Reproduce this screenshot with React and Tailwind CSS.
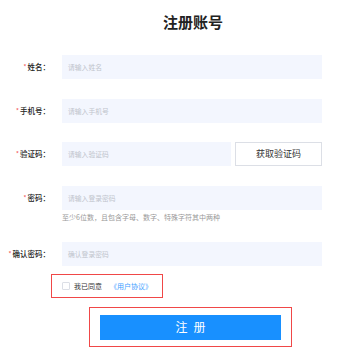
export default function App() {
  const font = { fontFamily: '"Noto Sans CJK SC", "Noto Sans", sans-serif' };
  const Row = ({ label, placeholder, mt, children }) => (
    <div className={`flex items-center ${mt}`}>
      <div className="w-[50px] shrink-0 flex justify-end items-center text-[7.5px] font-medium text-[#222] leading-none">
        <span className="text-[#f25b5b] text-[6px] mr-[1px]">*</span>
        <span>{label}：</span>
      </div>
      <div className="ml-[12px] flex items-center gap-[4px]">
        {children ? children : (
          <div className="w-[260px] h-[24px] bg-[#f3f6fe] flex items-center pl-[6px] text-[6.8px] text-[#c0c4cc]">{placeholder}</div>
        )}
      </div>
    </div>
  );
  return (
    <div className="w-[357px] h-[359px] bg-white relative" style={font}>
      <div className="pt-[13px] pl-[163px] text-[15px] font-bold text-[#222] leading-[18px] tracking-[0px]">注册账号</div>
      <Row label="姓名" placeholder="请输入姓名" mt="mt-[24px]" />
      <Row label="手机号" placeholder="请输入手机号" mt="mt-[20px]" />
      <Row label="验证码" mt="mt-[19px]">
        <div className="w-[169px] h-[24px] bg-[#f3f6fe] flex items-center pl-[6px] text-[6.8px] text-[#c0c4cc]">请输入验证码</div>
        <div className="w-[87px] h-[24px] border border-[#dcdfe6] bg-white flex items-center justify-center text-[9px] text-[#333]">获取验证码</div>
      </Row>
      <Row label="密码" placeholder="请输入登录密码" mt="mt-[20px]" />
      <div className="pl-[62px] mt-[2px] text-[7px] text-[#999] leading-[10px]">至少6位数，且包含字母、数字、特殊字符其中两种</div>
      <Row label="确认密码" placeholder="确认登录密码" mt="mt-[20px]" />
      <div className="mt-[8px] ml-[51px] w-[112px] h-[24px] border-[1.5px] border-[#f04848] flex items-center pl-[10px]">
        <div className="w-[8px] h-[8px] border border-[#dcdfe6] rounded-[1px] bg-white"></div>
        <span className="ml-[4px] text-[7px] text-[#333]">我已同意</span>
        <span className="ml-[8px] text-[7px] text-[#409eff]">《用户协议》</span>
      </div>
      <div className="mt-[9px] ml-[89px] w-[203px] h-[40px] border-[1.5px] border-[#f04848] flex items-center justify-center">
        <div className="w-[181px] h-[25px] bg-[#1890ff] flex items-center justify-center text-white text-[12px] tracking-[6px] pl-[6px]">注册</div>
      </div>
    </div>
  );
}
